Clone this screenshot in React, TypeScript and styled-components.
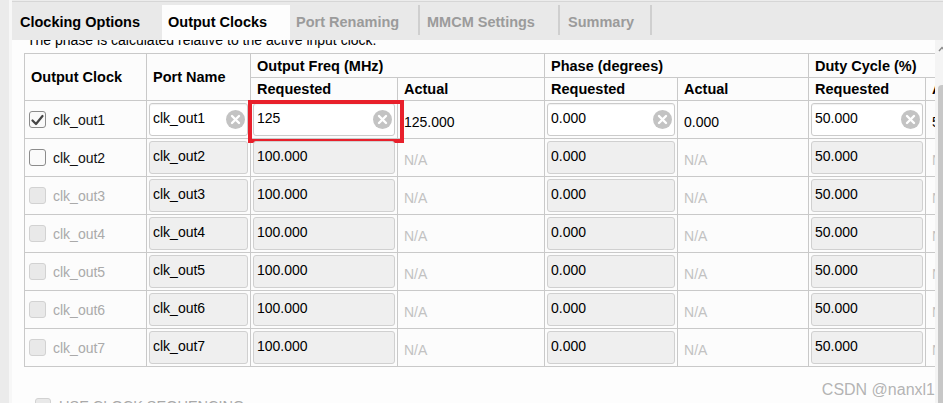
import React from 'react';
import styled, { createGlobalStyle } from 'styled-components';

const Global = createGlobalStyle`
  html, body { margin: 0; padding: 0; background: #ececec; }
  body { font-family: "Liberation Sans", Arial, sans-serif; color: #000; }
`;

const Window = styled.div`
  position: relative;
  width: 943px;
  height: 403px;
  overflow: hidden;
  display: flex;
  background: #ececec;
`;

const LeftStrip = styled.div`
  flex: none;
  width: 9px;
  background: #ebebeb;
  border-right: 3px solid #f7f7f7;
`;

const Main = styled.div`
  flex: 1;
  min-width: 0;
  display: flex;
  flex-direction: column;
`;

const TabBar = styled.div`
  flex: none;
  height: 38px;
  margin-top: 1px;
  border-top: 1px solid #d6d6d6;
  background: #e9e9e9;
  display: flex;
  align-items: flex-end;
`;

const Tab = styled.div<{ $w: number; $pl: number; $active?: boolean; $dim?: boolean }>`
  flex: none;
  box-sizing: border-box;
  width: ${(p) => p.$w}px;
  height: 35px;
  padding-left: ${(p) => p.$pl}px;
  padding-bottom: 1px;
  display: flex;
  align-items: center;
  font-size: 14.5px;
  font-weight: bold;
  white-space: nowrap;
  color: ${(p) => (p.$dim ? '#9b9b9b' : '#000')};
  background: ${(p) => (p.$active ? '#fdfdfd' : 'transparent')};
`;

const TabSep = styled.div`
  flex: none;
  width: 2px;
  height: 30px;
  margin-bottom: 5px;
  background: #cfcfcf;
`;

const Body = styled.div`
  flex: 1;
  min-height: 0;
  display: flex;
`;

const Pane = styled.div`
  flex: 1;
  min-width: 0;
  overflow: hidden;
  background: #fdfdfd;
  padding-left: 12px;
`;

const Notice = styled.div`
  margin-top: -8px;
  padding-left: 3px;
  height: 16px;
  line-height: 16px;
  font-size: 14px;
  white-space: nowrap;
  color: #000;
`;

const Table = styled.table`
  margin-top: 5px;
  border-collapse: collapse;
  table-layout: fixed;
  width: 1001px;
  background: #fcfcfc;
`;

const Tr = styled.tr`
  height: 38px;
`;

const Th = styled.th<{ $h: number }>`
  height: ${(p) => p.$h}px;
  padding: 0 6px;
  border: 1px solid #c9c9c9;
  text-align: left;
  vertical-align: middle;
  font-size: 14.5px;
  font-weight: bold;
  white-space: nowrap;
  overflow: hidden;
`;

const Td = styled.td<{ $text?: boolean }>`
  position: relative;
  padding: ${(p) => (p.$text ? '4px 6px 0' : '2px')};
  border: 1px solid #c9c9c9;
  vertical-align: middle;
  white-space: nowrap;
  overflow: ${(p) => (p.$text ? 'hidden' : 'visible')};
  font-size: 14px;
`;

const Plain = styled.span<{ $na?: boolean }>`
  color: ${(p) => (p.$na ? '#c2c2c2' : '#000')};
`;

const ClockCell = styled.div`
  display: flex;
  align-items: center;
  gap: 7px;
  padding-left: 2px;
`;

const Box = styled.span<{ $state: 'checked' | 'off' | 'disabled'; $size?: number }>`
  flex: none;
  box-sizing: border-box;
  width: ${(p) => p.$size ?? 17}px;
  height: ${(p) => p.$size ?? 17}px;
  border-radius: 3px;
  border: 1px solid ${(p) => (p.$state === 'disabled' ? '#d2d2d2' : '#8c8c8c')};
  background: ${(p) => (p.$state === 'disabled' ? '#e9e9e9' : '#fafafa')};
  display: flex;
  align-items: center;
  justify-content: center;
`;

const ClockLabel = styled.span<{ $dim?: boolean }>`
  font-size: 14px;
  color: ${(p) => (p.$dim ? '#aaaaaa' : '#111')};
`;

const Field = styled.div<{ $disabled?: boolean }>`
  box-sizing: border-box;
  height: 33px;
  display: flex;
  align-items: center;
  padding: 0 2px 0 3px;
  border: 1px solid ${(p) => (p.$disabled ? '#d0d0d0' : '#cbcbcb')};
  border-radius: 3px;
  background: ${(p) => (p.$disabled ? '#efefef' : '#ffffff')};
  box-shadow: ${(p) => (p.$disabled ? 'none' : 'inset 0 1px 1px rgba(0,0,0,0.06)')};
`;

const FieldInput = styled.input`
  flex: 1;
  min-width: 0;
  border: 0;
  padding: 0;
  margin: -3px 0 0;
  outline: none;
  background: transparent;
  font-family: "Liberation Sans", Arial, sans-serif;
  font-size: 14px;
  color: #000;
  -webkit-text-fill-color: #000;
  opacity: 1;
`;

const Highlight = styled.div`
  position: absolute;
  top: -1px;
  left: -3px;
  right: -7px;
  bottom: -5px;
  border: 4px solid #e8202b;
  pointer-events: none;
`;

const SeqRow = styled.div`
  margin-top: 31px;
  padding-left: 11px;
  display: flex;
  align-items: center;
  gap: 8px;
`;

const SeqLabel = styled.span`
  font-size: 14.5px;
  color: #a9a9a9;
  white-space: nowrap;
`;

const Scroll = styled.div`
  flex: none;
  width: 8px;
  background: #f4f4f4;
  display: flex;
  flex-direction: column;
`;

const ScrollArrow = styled.svg`
  flex: none;
  margin: 6px 0 0 3px;
`;

const Thumb = styled.div`
  flex: 1;
  margin: 33px 0 0 3px;
  border-radius: 4px 0 0 0;
  background: #c7c7c7;
`;

const Watermark = styled.div`
  position: absolute;
  right: 8px;
  bottom: 4px;
  font-size: 16px;
  color: rgba(160, 160, 160, 0.8);
  white-space: nowrap;
  pointer-events: none;
`;

const Check = () => (
  <svg width="13" height="12" viewBox="0 0 13 12">
    <path d="M1.5 6.5 L5 10 L11.5 2" fill="none" stroke="#454545" strokeWidth="2.2" strokeLinecap="round" strokeLinejoin="round" />
  </svg>
);

const ClearIcon = () => (
  <svg width="19" height="19" viewBox="0 0 19 19" style={{ flex: 'none' }}>
    <circle cx="9.5" cy="9.5" r="9.5" fill="#c3c3c3" />
    <path d="M6 6 L13 13 M13 6 L6 13" stroke="#ffffff" strokeWidth="2.4" strokeLinecap="round" />
  </svg>
);

type FieldProps = { value: string; disabled?: boolean; clear?: boolean };
const InputField = ({ value, disabled, clear }: FieldProps) => (
  <Field $disabled={disabled}>
    <FieldInput value={value} readOnly disabled={disabled} />
    {clear && <ClearIcon />}
  </Field>
);

type Row = {
  n: number;
  state: 'checked' | 'off' | 'disabled';
};

const rows: Row[] = [
  { n: 1, state: 'checked' },
  { n: 2, state: 'off' },
  { n: 3, state: 'disabled' },
  { n: 4, state: 'disabled' },
  { n: 5, state: 'disabled' },
  { n: 6, state: 'disabled' },
  { n: 7, state: 'disabled' },
];

const cols = [122, 104, 147, 147, 133, 131, 117, 100];

export default function App() {
  return (
    <>
      <Global />
      <Window>
        <LeftStrip />
        <Main>
          <TabBar>
            <Tab $w={150} $pl={8}>Clocking Options</Tab>
            <Tab $w={128} $pl={6} $active>Output Clocks</Tab>
            <Tab $w={128} $pl={6} $dim>Port Renaming</Tab>
            <TabSep />
            <Tab $w={138} $pl={7} $dim>MMCM Settings</Tab>
            <TabSep />
            <Tab $w={90} $pl={8} $dim>Summary</Tab>
            <TabSep />
          </TabBar>
          <Body>
            <Pane>
              <Notice>The phase is calculated relative to the active input clock.</Notice>
              <Table>
                <colgroup>
                  {cols.map((w, i) => (
                    <col key={i} style={{ width: w }} />
                  ))}
                </colgroup>
                <thead>
                  <tr>
                    <Th $h={23} rowSpan={2}>Output Clock</Th>
                    <Th $h={23} rowSpan={2}>Port Name</Th>
                    <Th $h={23} colSpan={2}>Output Freq (MHz)</Th>
                    <Th $h={23} colSpan={2}>Phase (degrees)</Th>
                    <Th $h={23} colSpan={2}>Duty Cycle (%)</Th>
                  </tr>
                  <tr>
                    <Th $h={22}>Requested</Th>
                    <Th $h={22}>Actual</Th>
                    <Th $h={22}>Requested</Th>
                    <Th $h={22}>Actual</Th>
                    <Th $h={22}>Requested</Th>
                    <Th $h={22}>Actual</Th>
                  </tr>
                </thead>
                <tbody>
                  {rows.map((r) => {
                    const on = r.state === 'checked';
                    return (
                      <Tr key={r.n}>
                        <Td>
                          <ClockCell>
                            <Box $state={r.state}>{on && <Check />}</Box>
                            <ClockLabel $dim={r.state === 'disabled'}>clk_out{r.n}</ClockLabel>
                          </ClockCell>
                        </Td>
                        <Td>
                          <InputField value={`clk_out${r.n}`} disabled={!on} clear={on} />
                        </Td>
                        <Td>
                          <InputField value={on ? '125' : '100.000'} disabled={!on} clear={on} />
                          {on && <Highlight />}
                        </Td>
                        <Td $text>
                          <Plain $na={!on}>{on ? '125.000' : 'N/A'}</Plain>
                        </Td>
                        <Td>
                          <InputField value="0.000" disabled={!on} clear={on} />
                        </Td>
                        <Td $text>
                          <Plain $na={!on}>{on ? '0.000' : 'N/A'}</Plain>
                        </Td>
                        <Td>
                          <InputField value="50.000" disabled={!on} clear={on} />
                        </Td>
                        <Td $text>
                          <Plain $na={!on}>{on ? '50.000' : 'N/A'}</Plain>
                        </Td>
                      </Tr>
                    );
                  })}
                </tbody>
              </Table>
              <SeqRow>
                <Box $state="disabled" $size={16} />
                <SeqLabel>USE CLOCK SEQUENCING</SeqLabel>
              </SeqRow>
            </Pane>
            <Scroll>
              <ScrollArrow width="8" height="6" viewBox="0 0 8 6">
                <path d="M1 5 L4 1.5 L7 5" fill="none" stroke="#8a8a8a" strokeWidth="1.4" />
              </ScrollArrow>
              <Thumb />
            </Scroll>
          </Body>
        </Main>
        <Watermark>CSDN @nanxl1</Watermark>
      </Window>
    </>
  );
}
